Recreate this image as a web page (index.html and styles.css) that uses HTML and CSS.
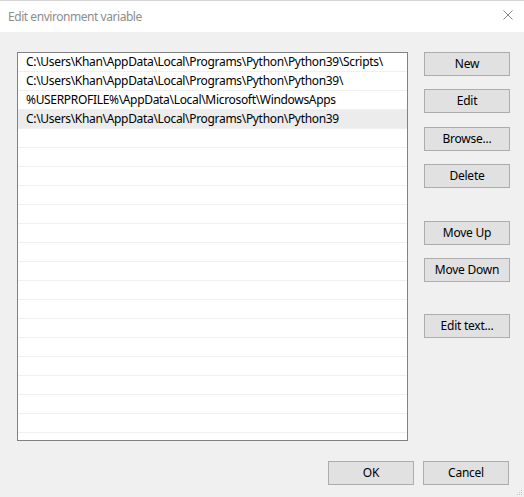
FILE: index.html
```html
<!DOCTYPE html>
<html>
<head>
<meta charset="utf-8">
<link rel="stylesheet" href="styles.css">
</head>
<body>
<div class="window">
  <div class="titlebar">
    <span class="title">Edit environment variable</span>
    <svg class="close" width="10" height="10" viewBox="0 0 10 10"><path d="M0.5 0.5 L9.5 9.5 M9.5 0.5 L0.5 9.5" stroke="#8a8a8a" stroke-width="1" fill="none"/></svg>
  </div>
  <div class="content">
    <div class="main">
      <div class="list">
        <div class="row">C:\Users\Khan\AppData\Local\Programs\Python\Python39\Scripts\</div>
        <div class="row">C:\Users\Khan\AppData\Local\Programs\Python\Python39\</div>
        <div class="row">%USERPROFILE%\AppData\Local\Microsoft\WindowsApps</div>
        <div class="row selected">C:\Users\Khan\AppData\Local\Programs\Python\Python39</div>
        <div class="row"></div><div class="row"></div><div class="row"></div><div class="row"></div>
        <div class="row"></div><div class="row"></div><div class="row"></div><div class="row"></div>
        <div class="row"></div><div class="row"></div><div class="row"></div><div class="row"></div>
        <div class="row"></div><div class="row"></div><div class="row"></div><div class="row"></div>
        <div class="row"></div><div class="row"></div>
      </div>
      <div class="buttons">
        <button class="btn">New</button>
        <button class="btn">Edit</button>
        <button class="btn">Browse...</button>
        <button class="btn">Delete</button>
        <button class="btn group">Move Up</button>
        <button class="btn">Move Down</button>
        <button class="btn group2">Edit text...</button>
      </div>
    </div>
    <div class="footer">
      <button class="btn">OK</button>
      <button class="btn">Cancel</button>
    </div>
  </div>
  <svg class="grip" width="6" height="6" viewBox="0 0 6 6">
    <rect x="4" y="0" width="1" height="1" fill="#c4c4c4"/>
    <rect x="2" y="2" width="1" height="1" fill="#c4c4c4"/>
    <rect x="4" y="2" width="1" height="1" fill="#c4c4c4"/>
    <rect x="0" y="4" width="1" height="1" fill="#c4c4c4"/>
    <rect x="2" y="4" width="1" height="1" fill="#c4c4c4"/>
    <rect x="4" y="4" width="1" height="1" fill="#c4c4c4"/>
  </svg>
</div>
</body>
</html>
```
FILE: styles.css
```css
html, body {
  margin: 0;
  padding: 0;
}
body {
  width: 524px;
  height: 497px;
  overflow: hidden;
  font-family: "Noto Sans", "Open Sans", sans-serif;
  font-size: 12px;
}
.window {
  position: relative;
  width: 524px;
  height: 497px;
  background: #f0f0f0;
}
.titlebar {
  height: 31px;
  background: #ffffff;
  border-top: 1px solid #d4d4d4;
  display: flex;
  align-items: center;
  justify-content: space-between;
  padding: 0 11px 0 8px;
}
.title {
  color: #8c8c8c;
  font-size: 12px;
  letter-spacing: -0.45px;
  margin-top: -1px;
}
.close {
  display: block;
  margin-top: -4px;
}
.content {
  padding: 20px 14px 0 17px;
}
.main {
  display: flex;
  gap: 16px;
  align-items: flex-start;
}
.list {
  width: 389px;
  height: 387px;
  border: 1px solid #828282;
  background: #ffffff;
  overflow: hidden;
}
.row {
  height: 18px;
  line-height: 18px;
  border-bottom: 1px solid #f0f0f0;
  padding-left: 8px;
  color: #000;
  white-space: nowrap;
  letter-spacing: -0.32px;
}
.row.selected {
  background: #ececec;
}
.buttons {
  display: flex;
  flex-direction: column;
  width: 86px;
}
.btn {
  width: 86px;
  height: 24px;
  margin: 0;
  padding: 0;
  border: 1px solid #adadad;
  background: #e1e1e1;
  color: #000;
  font-family: "Noto Sans", "Open Sans", sans-serif;
  font-size: 12px;
  letter-spacing: -0.25px;
  line-height: 20px;
  text-align: center;
}
.buttons .btn + .btn {
  margin-top: 13px;
}
.buttons .btn:nth-child(3) {
  margin-top: 14px;
}
.buttons .btn.group {
  margin-top: 33px;
}
.buttons .btn.group2 {
  margin-top: 32px;
}
.footer {
  display: flex;
  justify-content: flex-end;
  gap: 9px;
  margin-top: 20px;
  padding-right: 1px;
}
.grip {
  position: absolute;
  right: 1px;
  bottom: 1px;
}
```
